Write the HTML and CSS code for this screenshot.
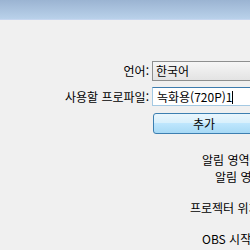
FILE: index.html
```html
<!DOCTYPE html>
<html lang="ko">
<head>
  <meta charset="UTF-8">
  <title>설정</title>
  <link rel="stylesheet" href="styles.css">
</head>
<body>
  <div class="titlebar"></div>

  <div class="form">
    <label class="row-label">언어:</label>
    <div class="select">한국어</div>

    <label class="row-label">사용할 프로파일:</label>
    <div class="textbox">녹화용(720P)1<span class="caret"></span></div>

    <span></span>
    <button class="btn">추가</button>
  </div>

  <div class="options">
    <div class="opt opt-a">알림 영역에 최소화</div>
    <div class="opt opt-b">알림 영역에 표시</div>
    <div class="opt opt-c gap">프로젝터 위치 고정</div>
    <div class="opt opt-a gap">OBS 시작 시 자동 실행</div>
  </div>
</body>
</html>
```

FILE: styles.css
```css
body {
  margin: 0;
  width: 250px;
  height: 250px;
  overflow: hidden;
  background: #f0f0f0;
  font-family: "Noto Sans CJK KR", "DejaVu Sans", sans-serif;
  font-size: 12px;
  color: #000;
}
.titlebar {
  height: 19px;
  background: linear-gradient(#9bb4d2, #b9d1ea);
  border-bottom: 1px solid #c6d6ef;
}
.form {
  display: grid;
  grid-template-columns: 149px 400px;
  column-gap: 3px;
  row-gap: 6px;
  margin-top: 41px;
  align-items: center;
}
.row-label {
  text-align: right;
  white-space: nowrap;
  line-height: 14px;
}
.select {
  height: 18px;
  border: 1px solid #8e8f8f;
  background: linear-gradient(#f6f6f6, #e3e3e3);
  padding-left: 3px;
  line-height: 18px;
}
.textbox {
  height: 17px;
  border: 1px solid #a4c9e3;
  border-top-color: #3d7bad;
  background: #fff;
  padding-left: 4px;
  line-height: 17px;
}
.caret {
  display: inline-block;
  width: 1px;
  height: 13px;
  background: #000;
  vertical-align: -2px;
}
.btn {
  justify-self: start;
  width: 102px;
  height: 21px;
  margin: 1px 0 0 1px;
  border: 1px solid #3c7fb1;
  border-radius: 3px;
  background: linear-gradient(#eaf6fd 0%, #d9f0fc 45%, #bee6fd 50%, #a7d9f5 100%);
  font: inherit;
  padding: 0;
}
.options {
  margin-top: 17px;
}
.opt {
  white-space: nowrap;
  line-height: 17px;
}
.opt-a { padding-left: 202px; }
.opt-b { padding-left: 215px; }
.opt-c { padding-left: 190px; }
.gap { margin-top: 14px; }
```
